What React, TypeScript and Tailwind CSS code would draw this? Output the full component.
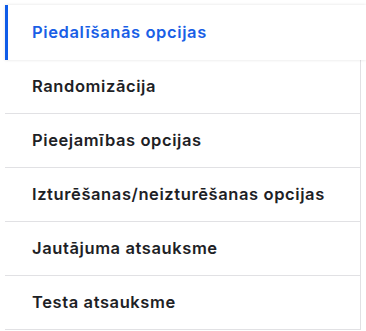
const ITEMS = [
  "Piedalīšanās opcijas",
  "Randomizācija",
  "Pieejamības opcijas",
  "Izturēšanas/neizturēšanas opcijas",
  "Jautājuma atsauksme",
  "Testa atsauksme",
];

export default function App() {
  const active = 0;
  return (
    <div className="h-[331px] w-[366px] overflow-hidden bg-white pl-[5px] pt-[5px] font-['Inter',sans-serif]">
      <nav className="flex flex-col">
        {ITEMS.map((label, i) =>
          i === active ? (
            <div
              key={label}
              className="relative z-10 flex h-[55px] items-center border-l-[3px] border-[#0f5ce8] bg-white pl-[24px] text-[16.5px] font-semibold tracking-[0.6px] text-[#1a5fe6] shadow-[0_0_3px_rgba(0,0,0,0.12)]"
            >
              {label}
            </div>
          ) : (
            <div
              key={label}
              className="mr-[5px] flex h-[54px] items-center border-r border-b border-[#e1e1e4] pl-[27px] text-[16.5px] font-semibold tracking-[0.6px] text-[#1d2125]"
            >
              {label}
            </div>
          )
        )}
      </nav>
    </div>
  );
}
